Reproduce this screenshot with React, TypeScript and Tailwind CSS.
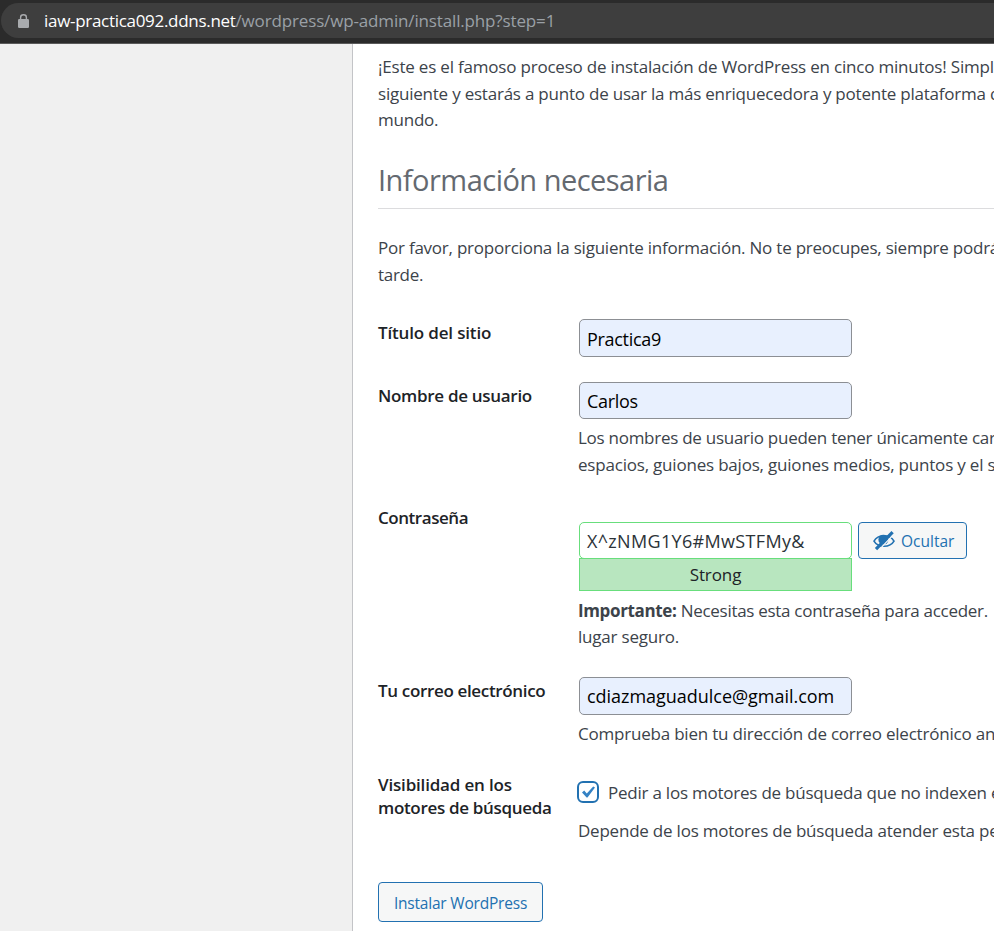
import type { ReactNode } from "react";

function Line({ className = "tracking-[-0.22px]", children }: { className?: string; children: ReactNode }) {
  return (
    <div className={`h-[26px] whitespace-nowrap leading-[26px] ${className}`}>
      <span>{children}</span>
    </div>
  );
}

function Row({ label, className, labelClass, children }: { label: ReactNode; className: string; labelClass: string; children: ReactNode }) {
  return (
    <section className={`flex ${className}`}>
      <div className={`w-[201px] shrink-0 font-semibold text-[#1d2327] ${labelClass}`}>{label}</div>
      <div className="min-w-0 grow">{children}</div>
    </section>
  );
}

function Field({ value, className }: { value: string; className: string }) {
  return (
    <div className={`flex w-[273px] items-center whitespace-nowrap rounded-[5px] border pl-[7px] text-[18px] ${className}`}>
      <span>{value}</span>
    </div>
  );
}

function AddressBar() {
  return (
    <header className="h-11 border-b border-[#5a5a5a] bg-[#2b2b2b] pt-[3px] pl-px">
      <div className="flex h-[35px] items-center rounded-l-full bg-[#3e3e3e] pl-[17px] text-[17px]">
        <svg width="11" height="14" viewBox="0 0 11 14" className="shrink-0">
          <rect x="0" y="5" width="11" height="9" rx="1.2" fill="#a9abae" />
          <path d="M2.6 5.5V3.4a2.9 2.6 0 0 1 5.8 0V5.5" fill="none" stroke="#a9abae" strokeWidth="1.4" />
        </svg>
        <div className="ml-[15px] whitespace-nowrap text-[#9aa0a6]">
          <span className="tracking-[-0.3px] text-white">iaw-practica092.ddns.net</span>
          <span className="tracking-[-0.15px]">/wordpress/wp-admin/install.php?step=1</span>
        </div>
      </div>
    </header>
  );
}

function HiddenEyeIcon() {
  return (
    <svg width="22" height="20" viewBox="0 0 22 20" className="shrink-0" fill="none" stroke="#2271b1">
      <path d="M1 10.2C5 3 17 3 21 10.2C17 17 5 17 1 10.2Z" strokeWidth="1.6" />
      <circle cx="10.4" cy="8.8" r="5" fill="#2271b1" stroke="none" />
      <path d="M5.4 19.6L21 3" stroke="#f6f7f7" strokeWidth="1.2" />
      <path d="M3 18.2L19.6 1.2" strokeWidth="3.2" />
    </svg>
  );
}

export default function App() {
  return (
    <div className="flex h-[931px] w-[994px] flex-col overflow-hidden bg-[#f0f0f0] font-['Open_Sans','Noto_Sans',sans-serif] font-normal">
      <AddressBar />
      <main className="ml-[352px] grow overflow-hidden border-l border-[#c3c4c7] bg-white pl-[25px] text-[17px] text-[#3c434a]">
        <div className="pt-[10px]">
          <Line className="tracking-[-0.2px]">¡Este es el famoso proceso de instalación de WordPress en cinco minutos! Simpl</Line>
          <Line className="mt-px tracking-[-0.22px]">siguiente y estarás a punto de usar la más enriquecedora y potente plataforma d</Line>
          <Line>mundo.</Line>
        </div>
        <h1 className="mt-[27px] h-[49px] whitespace-nowrap border-b border-[#dcdcde] text-[29px] font-normal leading-[40px] tracking-[-0.52px] text-[#646970]">
          <span>Información necesaria</span>
        </h1>
        <div className="mt-[26px]">
          <Line className="tracking-[-0.23px]">Por favor, proporciona la siguiente información. No te preocupes, siempre podrá</Line>
          <Line className="mt-px tracking-[-0.3px]">tarde.</Line>
        </div>

        <Row label="Título del sitio" className="mt-[31px] h-[63px]" labelClass="pt-px leading-[26px] tracking-[-0.16px]">
          <Field value="Practica9" className="h-[38px] border-[#8c8f94] bg-[#e8f0fe] pt-[2px] tracking-[-0.3px] text-black" />
        </Row>
        <Row label="Nombre de usuario" className="h-[123px]" labelClass="pt-px leading-[26px] tracking-[-0.3px]">
          <Field value="Carlos" className="h-[37px] border-[#8c8f94] bg-[#e8f0fe] pt-[2px] tracking-[-0.3px] text-black" />
          <Line className="mt-[6px] -ml-px tracking-[-0.27px]">Los nombres de usuario pueden tener únicamente car</Line>
          <Line className="mt-px -ml-px tracking-[-0.2px]">espacios, guiones bajos, guiones medios, puntos y el s</Line>
        </Row>
        <Row label="Contraseña" className="h-[172px]" labelClass="leading-[26px] tracking-[-0.45px]">
          <div className="flex gap-[6px] pt-[17px]">
            <div>
              <Field value="X^zNMG1Y6#MwSTFMy&" className="h-[37px] border-[#68de7c] bg-white pt-[2px] tracking-[0.33px] text-[#2c3338]" />
              <div className="-mt-px h-[33px] w-[273px] border border-[#68de7c] bg-[#b8e6bf] text-center leading-[32px] tracking-[-0.1px] text-[#1d2327]">
                <span>Strong</span>
              </div>
            </div>
            <button className="flex h-[37px] w-[109px] items-center rounded-[4px] border border-[#2271b1] bg-[#f6f7f7] pl-[14px] text-[15.5px] text-[#2271b1]">
              <HiddenEyeIcon />
              <span className="ml-[6px] pt-[2px]">Ocultar</span>
            </button>
          </div>
          <Line className="mt-[7px] -ml-px tracking-[-0.29px]">
            <b className="tracking-[-0.35px]">Importante:</b> Necesitas esta contraseña para acceder.
          </Line>
          <Line className="-ml-px tracking-[-0.2px]">lugar seguro.</Line>
        </Row>
        <Row label="Tu correo electrónico" className="h-[96px]" labelClass="pt-px leading-[26px] tracking-[-0.34px]">
          <Field value="cdiazmaguadulce@gmail.com" className="h-[38px] border-[#8c8f94] bg-[#e8f0fe] tracking-[-0.03px] text-black" />
          <Line className="mt-[6px] -ml-px tracking-[-0.21px]">Comprueba bien tu dirección de correo electrónico an</Line>
        </Row>
        <Row
          label={
            <>
              <div className="whitespace-nowrap tracking-[-0.18px]"><span>Visibilidad en los</span></div>
              <div className="whitespace-nowrap tracking-[-0.32px]"><span>motores de búsqueda</span></div>
            </>
          }
          className="h-[109px]"
          labelClass="leading-[23px]"
        >
          <div className="-ml-[2px] flex items-center pt-[5px]">
            <span className="flex size-[22px] shrink-0 items-center justify-center rounded-[6px] border-2 border-[#2271b1] bg-white">
              <svg width="15" height="14" viewBox="0 0 15 14" className="shrink-0">
                <path d="M1 7.4L3.2 5.6L5.8 8.6L12.2 1.5L14 2.6L6.5 12.6H5.6Z" fill="#3582c4" />
              </svg>
            </span>
            <Line className="mt-[2px] ml-[9px] tracking-[-0.23px]">Pedir a los motores de búsqueda que no indexen e</Line>
          </div>
          <Line className="mt-[12px] -ml-px tracking-[-0.22px]">Depende de los motores de búsqueda atender esta pe</Line>
        </Row>
        <button className="flex h-10 w-[165px] items-center justify-center whitespace-nowrap rounded-[4px] border border-[#2271b1] bg-[#f6f7f7] pt-[4px] text-[15.5px] tracking-[-0.2px] text-[#2271b1]">
          <span>Instalar WordPress</span>
        </button>
      </main>
    </div>
  );
}
